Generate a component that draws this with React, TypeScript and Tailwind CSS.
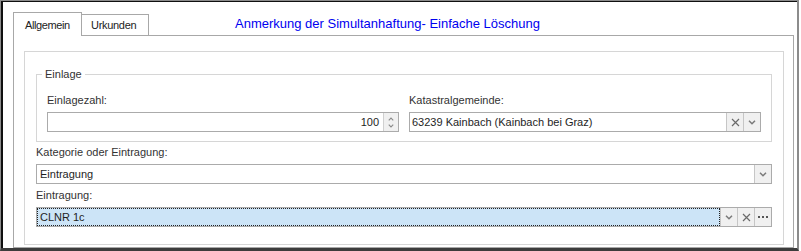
import React from "react";

const Chevron = ({ up = false, w = 8, h = 5, color = "#7a7a7a" }: { up?: boolean; w?: number; h?: number; color?: string }) => (
  <svg width={w} height={h} viewBox="0 0 8 5" className="block">
    <path d={up ? "M1 4.2 L4 1.2 L7 4.2" : "M1 0.8 L4 3.8 L7 0.8"} stroke={color} strokeWidth="1.5" fill="none" />
  </svg>
);

const Cross = () => (
  <svg width="9" height="9" viewBox="0 0 9 9" className="block">
    <path d="M1 1 L8 8 M8 1 L1 8" stroke="#6a6a6a" strokeWidth="1.2" fill="none" />
  </svg>
);

const Dots = () => (
  <div className="flex gap-[2px]">
    <div className="w-[2px] h-[2px] bg-[#555]" />
    <div className="w-[2px] h-[2px] bg-[#555]" />
    <div className="w-[2px] h-[2px] bg-[#555]" />
  </div>
);

const Btn = ({ children }: { children: React.ReactNode }) => (
  <div className="w-[17px] shrink-0 flex items-center justify-center bg-[#f0f0f0] border-l border-[#c6c6c6]">{children}</div>
);

const Label = ({ children }: { children: React.ReactNode }) => (
  <div className="text-[11px] leading-[14px] text-[#333] mb-[5px]">{children}</div>
);

export default function App() {
  return (
    <div className="w-[801px] h-[251px] bg-white pr-[2px] font-['Liberation_Sans',Arial,sans-serif]">
      <div className="h-full border-t border-l border-[#8c8c8c] border-r-2 border-r-[#8c8c8c] border-b-[3px] border-b-[#3c3c3c]">
        <div className="h-full border-t border-l-2 border-[#101010] flex flex-col pl-[10px] pr-[3px] pt-[10px]">
          {/* Tabs */}
          <div className="flex items-end h-[23px] shrink-0">
            <div className="relative z-10 w-[69px] h-[24px] -mb-px bg-white border-t border-l border-r border-[#a8a8a8] pl-[11px] pt-[5px] text-[11px] leading-[14px] tracking-[-0.4px] text-[#222] whitespace-nowrap">
              Allgemein
            </div>
            <div className="w-[67px] h-[21px] bg-white border-t border-r border-[#a8a8a8] pl-[9px] pt-[3px] text-[11px] leading-[14px] tracking-[-0.3px] text-[#222] whitespace-nowrap">
              Urkunden
            </div>
            <div className="self-center ml-[86px] text-[13px] leading-[15px] text-[#0000f0]">
              Anmerkung der Simultanhaftung- Einfache Löschung
            </div>
          </div>
          {/* Panel */}
          <div className="flex-1 border border-[#a8a8a8] flex flex-col pl-[10px] pt-[15px] pr-[9px] pb-[2px]">
            <div className="flex-1 border border-[#d6d6d6] px-[11px]">
              {/* Einlage group */}
              <div className="relative mt-[22px] border border-[#d6d6d6] pt-[18px] pb-[9px] px-[10px]">
                <div className="absolute -top-[8px] left-[5px] px-[3px] bg-white text-[11px] leading-[14px] text-[#333]">Einlage</div>
                <div className="grid grid-cols-2 gap-x-[10px]">
                  <div>
                    <Label>Einlagezahl:</Label>
                    <div className="h-[20px] flex border border-[#ababab] bg-white">
                      <div className="flex-1 flex items-center justify-end pr-[4px] text-[11px] text-[#1e1e1e]">100</div>
                      <div className="w-[15px] shrink-0 flex flex-col items-center justify-center gap-[3px] bg-[#f0f0f0] border-l border-[#d0d0d0]">
                        <Chevron up w={6} h={4} color="#8a8a8a" />
                        <Chevron w={6} h={4} color="#8a8a8a" />
                      </div>
                    </div>
                  </div>
                  <div>
                    <Label>Katastralgemeinde:</Label>
                    <div className="h-[20px] flex border border-[#ababab] bg-white">
                      <div className="flex-1 flex items-center pl-[2px] text-[11px] text-[#1e1e1e]">63239 Kainbach (Kainbach bei Graz)</div>
                      <Btn><Cross /></Btn>
                      <Btn><Chevron /></Btn>
                    </div>
                  </div>
                </div>
              </div>
              {/* Kategorie */}
              <div className="mt-[3px]">
                <Label>Kategorie oder Eintragung:</Label>
                <div className="h-[20px] flex border border-[#ababab] bg-white">
                  <div className="flex-1 flex items-center pl-[3px] text-[11px] text-[#1e1e1e]">Eintragung</div>
                  <Btn><Chevron /></Btn>
                </div>
              </div>
              {/* Eintragung */}
              <div className="mt-[4px]">
                <Label>Eintragung:</Label>
                <div className="h-[20px] flex border border-[#ababab] bg-white">
                  <div className="flex-1 flex items-center pl-[2px] text-[11px] text-[#1e1e1e] bg-[#cce4f7] border border-dotted border-[#222]">CLNR 1c</div>
                  <Btn><Chevron /></Btn>
                  <Btn><Cross /></Btn>
                  <Btn><Dots /></Btn>
                </div>
              </div>
            </div>
          </div>
        </div>
      </div>
    </div>
  );
}
